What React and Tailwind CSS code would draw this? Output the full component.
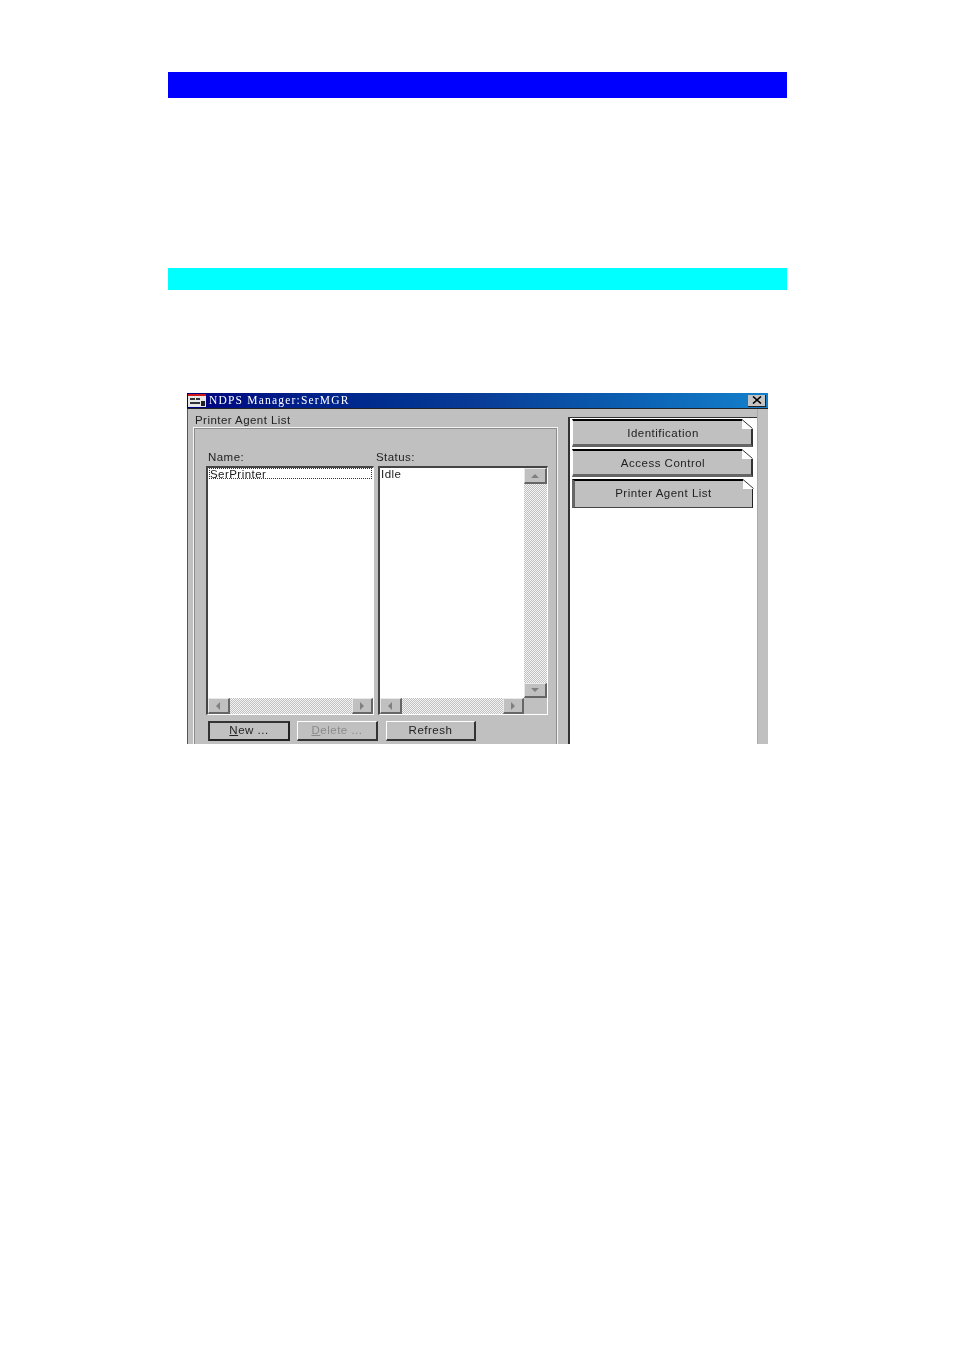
import React from 'react';

const sans = "font-['Liberation_Sans',Arial,sans-serif]";

// triangle glyphs for the scrollbar arrows
const Arrow = ({ dir, color = '#808080' }) => {
  const points = {
    up: '1,6 5,2 9,6',
    down: '1,2 5,6 9,2',
    left: '6,0 2,4 6,8',
    right: '3,0 7,4 3,8',
  };
  return (
    <svg width="10" height="8" viewBox="0 0 10 8">
      <polygon points={points[dir]} fill={color} />
    </svg>
  );
};

const ScrollBtn = ({ dir, className = '' }) => (
  <div className={`flex items-center justify-center bg-[#c0c0c0] border-t border-l border-t-[#e8e8e8] border-l-[#e8e8e8] border-r-2 border-b-2 border-r-[#666] border-b-[#666] ${className}`}>
    <Arrow dir={dir} />
  </div>
);

const dither = 'bg-[repeating-conic-gradient(#c0c0c0_0_25%,#f4f4f4_0_50%)] bg-[length:2px_2px]';

const HScroll = ({ className = '' }) => (
  <div className={`flex h-[16px] ${dither} ${className}`}>
    <ScrollBtn dir="left" className="w-[22px]" />
    <div className="flex-1" />
    <ScrollBtn dir="right" className="w-[21px]" />
  </div>
);

const Tab = ({ label, active }) => (
  <div className={`relative flex items-center justify-center bg-[#c0c0c0] border-t-2 border-t-black ${active
    ? 'h-[29px] border-l-[3px] border-l-[#666] border-b border-b-[#444] border-r border-r-[#222]'
    : 'h-[28px] pt-[2px] pl-[2px] border-l border-l-white border-b-[3px] border-b-[#666] border-r-2 border-r-[#333]'}`}>
    <span className={`text-[11.5px] tracking-[0.5px] text-[#222] ${sans}`}>{label}</span>
    {/* dog-ear in the corner */}
    <svg className="absolute -top-[2px] -right-[2px]" width="11" height="10" viewBox="0 0 11 10">
      <rect width="11" height="10" fill="#fff" />
      <polyline points="0,0.5 10.5,9.5" stroke="#333" fill="none" />
    </svg>
  </div>
);

const Btn = ({ children, className = '' }) => (
  <div className={`flex items-center justify-center h-[20px] bg-[#c0c0c0] text-[11.5px] tracking-[0.5px] ${sans} ${className}`}>
    {children}
  </div>
);

export default function App() {
  return (
    <div className="min-h-[1349px] bg-white pl-[168px] pt-[72px]">
      <div className="w-[619px] h-[26px] bg-[#0000ff]" />
      <div className="w-[619px] h-[22px] mt-[170px] bg-[#00ffff]" />

      {/* dialog, cropped at the bottom like the page scan */}
      <div className={`ml-[19px] mt-[103px] w-[581px] h-[351px] overflow-hidden bg-[#c0c0c0] flex flex-col blur-[0.3px] ${sans}`}>
        <div className="h-[16px] flex items-center bg-gradient-to-r from-[#000080] via-[#0a3c96] to-[#1480cc] border-b border-b-[#222] shrink-0">
          <svg className="ml-[1px]" width="18" height="13" viewBox="0 0 18 13">
            <rect x="0" y="0" width="18" height="2" fill="#d01818" />
            <rect x="0" y="2" width="18" height="11" fill="#e8e8e8" />
            <rect x="2" y="4" width="5" height="2" fill="#333" />
            <rect x="8" y="4" width="4" height="2" fill="#333" />
            <rect x="2" y="8" width="10" height="2" fill="#333" />
            <rect x="13" y="7" width="4" height="5" fill="#222" />
          </svg>
          <span className="ml-[3px] text-[11.5px] leading-none tracking-[1.2px] text-white font-['Liberation_Serif',serif]">
            NDPS Manager:SerMGR
          </span>
          <div className="ml-auto mr-[2px] w-[18px] h-[12px] flex items-center justify-center bg-[#c4c4c4] border-r border-b border-r-[#222] border-b-[#222]">
            <svg width="10" height="8" viewBox="0 0 10 8">
              <path d="M1 0.5 L9 7.5 M9 0.5 L1 7.5" stroke="#000" strokeWidth="1.6" />
            </svg>
          </div>
        </div>

        <div className="flex flex-1 min-h-0">
          {/* left side */}
          <div className="w-[381px] shrink-0 pl-[5px] border-l border-l-[#555]">
            <div className="pl-[2px] pt-[4px] h-[18px] text-[11.5px] leading-[14px] tracking-[0.45px] text-[#222]">
              Printer Agent List
            </div>
            <div className="w-[365px] h-[322px] border-t border-l border-r border-t-[#f4f4f4] border-l-[#f4f4f4] border-r-[#f4f4f4] outline outline-1 outline-[#8c8c8c] -outline-offset-2 pl-[12px] pt-[20px]">
              <div className="flex text-[11.5px] leading-[18px] tracking-[0.45px] text-[#222]">
                <span className="w-[168px] pl-[2px]">Name:</span>
                <span className="pl-[2px]">Status:</span>
              </div>

              <div className="flex h-[249px] gap-[4px]">
                <div className="relative w-[168px] bg-white border-t-2 border-l-2 border-t-[#444] border-l-[#444] border-r border-b border-r-white border-b-white flex flex-col">
                  <div className="h-[11px] mx-[1px] border border-dotted border-[#333] text-[11.5px] leading-[10px] tracking-[0.45px] text-[#222]">
                    SerPrinter
                  </div>
                  <HScroll className="mt-auto" />
                </div>
                <div className="relative w-[170px] bg-white border-t-2 border-l-2 border-t-[#444] border-l-[#444] border-r border-b border-r-white border-b-white flex">
                  <div className="flex-1 min-w-0 flex flex-col">
                    <div className="flex-1 text-[11.5px] leading-[10px] tracking-[0.45px] text-[#222] pl-[1px] pt-[1px]">Idle</div>
                    <HScroll />
                  </div>
                  <div className="w-[23px] flex flex-col">
                    <div className={`flex-1 flex flex-col ${dither}`}>
                      <ScrollBtn dir="up" className="h-[16px]" />
                      <div className="flex-1" />
                      <ScrollBtn dir="down" className="h-[15px]" />
                    </div>
                    <div className="h-[16px] bg-[#c0c0c0]" />
                  </div>
                </div>
              </div>

              <div className="flex mt-[6px] ml-[2px] gap-[7px]">
                <Btn className="w-[82px] border-2 border-[#222] border-t-[#333] border-l-[#333] text-[#222]">
                  <span><span className="underline">N</span>ew ...</span>
                </Btn>
                <Btn className="w-[81px] border-t border-l border-t-white border-l-white border-r-2 border-b-2 border-r-[#333] border-b-[#333] text-[#8a8a8a]">
                  <span><span className="underline">D</span>elete ...</span>
                </Btn>
                <Btn className="w-[90px] ml-[1px] border-t border-l border-t-white border-l-white border-r-2 border-b-2 border-r-[#333] border-b-[#333] text-[#222]">
                  Refresh
                </Btn>
              </div>
            </div>
          </div>

          {/* right side */}
          <div className="w-[189px] shrink-0 border-l-2 border-l-[#333] mt-[8px] bg-white border-t border-t-[#333] pl-[2px] pr-[4px] pt-[1px] flex flex-col gap-[2px]">
            <Tab label="Identification" />
            <Tab label="Access Control" />
            <Tab label="Printer Agent List" active />
          </div>
          <div className="flex-1 border-l border-l-[#aaa]" />
        </div>
      </div>
    </div>
  );
}
